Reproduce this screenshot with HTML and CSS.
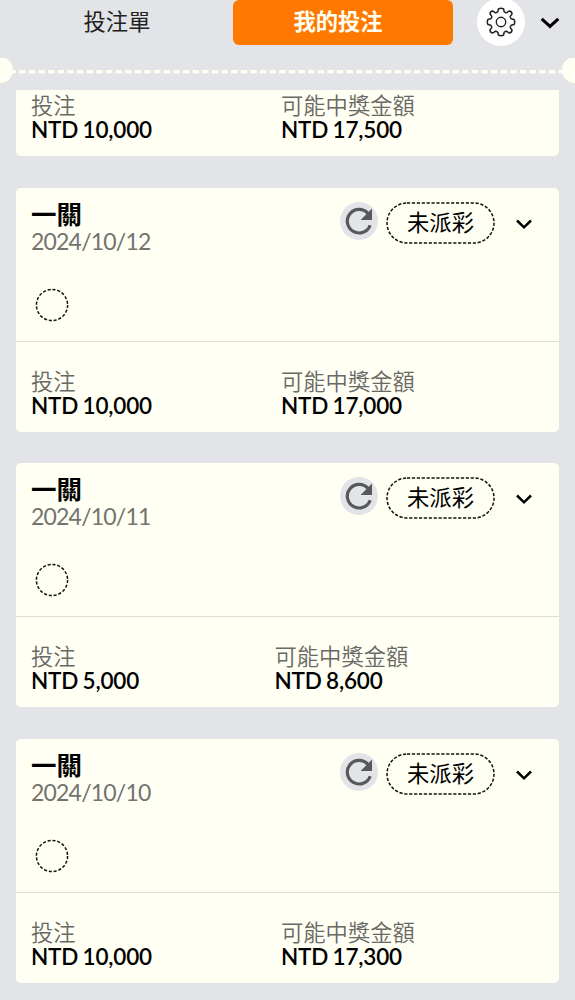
FILE: index.html
```html
<!DOCTYPE html>
<html lang="zh-Hant">
<head>
    <meta charset="UTF-8">
    <meta name="viewport" content="width=device-width, initial-scale=1.0">
    <title>我的投注</title>
    <link rel="stylesheet" href="styles.css">
</head>
<body>
    <!-- icons used more than once -->
    <svg class="sprite">
        <symbol id="refresh" viewBox="0 0 38 38">
            <path d="M30.2 23.2A11.8 11.8 0 1 1 28 11.4" fill="none" stroke="#56585a" stroke-width="3.2"/>
            <path d="M32 6.5V18H20.6Z" fill="#56585a"/>
        </symbol>
        <symbol id="arrow" viewBox="0 0 18 12">
            <path d="M2 2.5L9 9.3L16 2.5" fill="none" stroke="#000" stroke-width="2.5"/>
        </symbol>
        <symbol id="pill" viewBox="0 0 109 42">
            <rect x="1" y="1" width="107" height="40" rx="20" fill="none" stroke="#111" stroke-width="1.5" stroke-dasharray="3.2 1.7"/>
        </symbol>
        <symbol id="ring" viewBox="0 0 34 34">
            <circle cx="17" cy="17" r="15.6" fill="none" stroke="#111" stroke-width="1.5" stroke-dasharray="3.1 1.8"/>
        </symbol>
    </svg>

    <header class="header">
        <div class="tab">投注單</div>
        <div class="tab active">我的投注</div>
        <div class="settings">
            <svg width="30" height="30" viewBox="-15 -15 30 30">
                <path d="M-2.6 -13Q0 -14.4 2.6 -13L3.2 -10.2Q4.3 -9.2 5.6 -9.2L8 -11Q11 -10.8 11 -8L9.2 -5.6Q9.2 -4.3 10.2 -3.2L13 -2.6Q14.4 0 13 2.6L10.2 3.2Q9.2 4.3 9.2 5.6L11 8Q11 10.8 8 11L5.6 9.2Q4.3 9.2 3.2 10.2L2.6 13Q0 14.4 -2.6 13L-3.2 10.2Q-4.3 9.2 -5.6 9.2L-8 11Q-11 10.8 -11 8L-9.2 5.6Q-9.2 4.3 -10.2 3.2L-13 2.6Q-14.4 0 -13 -2.6L-10.2 -3.2Q-9.2 -4.3 -9.2 -5.6L-11 -8Q-11 -10.8 -8 -11L-5.6 -9.2Q-4.3 -9.2 -3.2 -10.2Z" fill="none" stroke="#222" stroke-width="1.5" stroke-linejoin="round"/>
                <circle r="4.7" fill="none" stroke="#222" stroke-width="1.4"/>
            </svg>
        </div>
        <svg class="close" width="20" height="12" viewBox="0 0 20 12"><path d="M1.7 1.8L10 9.4L18.3 1.8" fill="none" stroke="#000" stroke-width="3"/></svg>
    </header>

    <svg class="line" width="575" height="26" viewBox="0 0 575 26">
        <path d="M9.5 13.7H566" stroke="#fffff4" stroke-width="3.3" stroke-dasharray="6.5 3.13"/>
        <circle cx="0" cy="12" r="13" fill="#fffff4"/>
        <circle cx="575" cy="12" r="13" fill="#fffff4"/>
    </svg>

    <main class="list">
        <div class="card cut">
            <div class="bottom">
                <div class="sum"><div class="label">投注</div><div class="money">NTD 10,000</div></div>
                <div class="sum"><div class="label">可能中獎金額</div><div class="money">NTD 17,500</div></div>
            </div>
        </div>

        <div class="card">
            <div class="top">
                <div class="info"><div class="name">一關</div><div class="date">2024/10/12</div></div>
                <div class="refresh"><svg><use href="#refresh"/></svg></div>
                <div class="status"><svg><use href="#pill"/></svg><span>未派彩</span></div>
                <svg class="arrow"><use href="#arrow"/></svg>
            </div>
            <div class="legs"><svg class="ring"><use href="#ring"/></svg></div>
            <div class="bottom">
                <div class="sum"><div class="label">投注</div><div class="money">NTD 10,000</div></div>
                <div class="sum"><div class="label">可能中獎金額</div><div class="money">NTD 17,000</div></div>
            </div>
        </div>

        <div class="card">
            <div class="top">
                <div class="info"><div class="name">一關</div><div class="date">2024/10/11</div></div>
                <div class="refresh"><svg><use href="#refresh"/></svg></div>
                <div class="status"><svg><use href="#pill"/></svg><span>未派彩</span></div>
                <svg class="arrow"><use href="#arrow"/></svg>
            </div>
            <div class="legs"><svg class="ring"><use href="#ring"/></svg></div>
            <div class="bottom short">
                <div class="sum"><div class="label">投注</div><div class="money">NTD 5,000</div></div>
                <div class="sum"><div class="label">可能中獎金額</div><div class="money">NTD 8,600</div></div>
            </div>
        </div>

        <div class="card">
            <div class="top">
                <div class="info"><div class="name">一關</div><div class="date">2024/10/10</div></div>
                <div class="refresh"><svg><use href="#refresh"/></svg></div>
                <div class="status"><svg><use href="#pill"/></svg><span>未派彩</span></div>
                <svg class="arrow"><use href="#arrow"/></svg>
            </div>
            <div class="legs"><svg class="ring"><use href="#ring"/></svg></div>
            <div class="bottom">
                <div class="sum"><div class="label">投注</div><div class="money">NTD 10,000</div></div>
                <div class="sum"><div class="label">可能中獎金額</div><div class="money">NTD 17,300</div></div>
            </div>
        </div>
    </main>
</body>
</html>
```
FILE: styles.css
```css
*{
    box-sizing: border-box;
}
body{
    margin: 0;
    height: 1000px;
    overflow: hidden;
    background-color: #e3e4e7;
    font-family: Lato, "Noto Sans CJK TC", sans-serif;
    font-size: 22.3px;
    color: #000;
}
svg{
    display: block;
}
.sprite{
    display: none;
}
.header{
    display: flex;
    align-items: center;
    height: 45px;
}
.tab{
    width: 233px;
    height: 45px;
    padding-left: 1px;
    line-height: 44px;
    text-align: center;
    color: #222;
}
.tab.active{
    width: 220px;
    padding: 0 10px 0 0;
    border-radius: 6px;
    background-color: #ff7900;
    color: #fffff4;
    font-weight: bold;
}
.settings{
    display: flex;
    align-items: center;
    justify-content: center;
    width: 48px;
    height: 48px;
    margin: -2px 0 0 23.5px;
    border-radius: 50%;
    background-color: #fff;
}
.close{
    margin-left: 15.5px;
}
.line{
    margin-top: 13px;
}
.list{
    display: flex;
    flex-direction: column;
    gap: 31.6px;
    padding: 5.5px 16px 0;
}
.card{
    height: 244px;
    flex-shrink: 0;
    border-radius: 5px;
    background-color: #fffff4;
}
.card.cut{
    height: 66.5px;
    border-radius: 0 0 5px 5px;
}
.top{
    display: flex;
    height: 90px;
    padding: 14px 26px 0 15px;
}
.info{
    flex: 1;
}
.name{
    height: 26px;
    line-height: 24px;
    font-size: 25.5px;
    font-weight: bold;
}
.date{
    line-height: 27px;
    font-size: 23px;
    letter-spacing: -0.8px;
    color: #737370;
}
.refresh{
    width: 38px;
    height: 38px;
    border-radius: 50%;
    background-color: #e3e4e7;
}
.refresh svg{
    width: 38px;
    height: 38px;
}
.status{
    display: grid;
    width: 109px;
    height: 42px;
    margin: 0 20px 0 8px;
    place-items: center;
}
.status svg, .status span{
    grid-area: 1 / 1;
}
.status svg{
    width: 109px;
    height: 42px;
}
.status span{
    line-height: 42px;
}
.arrow{
    width: 18px;
    height: 12px;
    margin-top: 16px;
}
.legs{
    height: 64px;
    padding: 10px 0 0 19px;
    border-bottom: 1.5px solid #deded6;
}
.ring{
    width: 34px;
    height: 34px;
}
.bottom{
    display: grid;
    grid-template-columns: 250px 1fr;
    padding: 28px 15px 0;
}
.bottom.short{
    grid-template-columns: 243.5px 1fr;
}
.cut .bottom{
    padding-top: 4px;
}
.label{
    height: 24px;
    line-height: 24px;
    font-weight: 350;
    color: #686865;
}
.money{
    height: 25px;
    line-height: 24px;
    font-size: 22.5px;
    font-weight: 600;
    letter-spacing: -0.15px;
    word-spacing: -1.3px;
}
```
